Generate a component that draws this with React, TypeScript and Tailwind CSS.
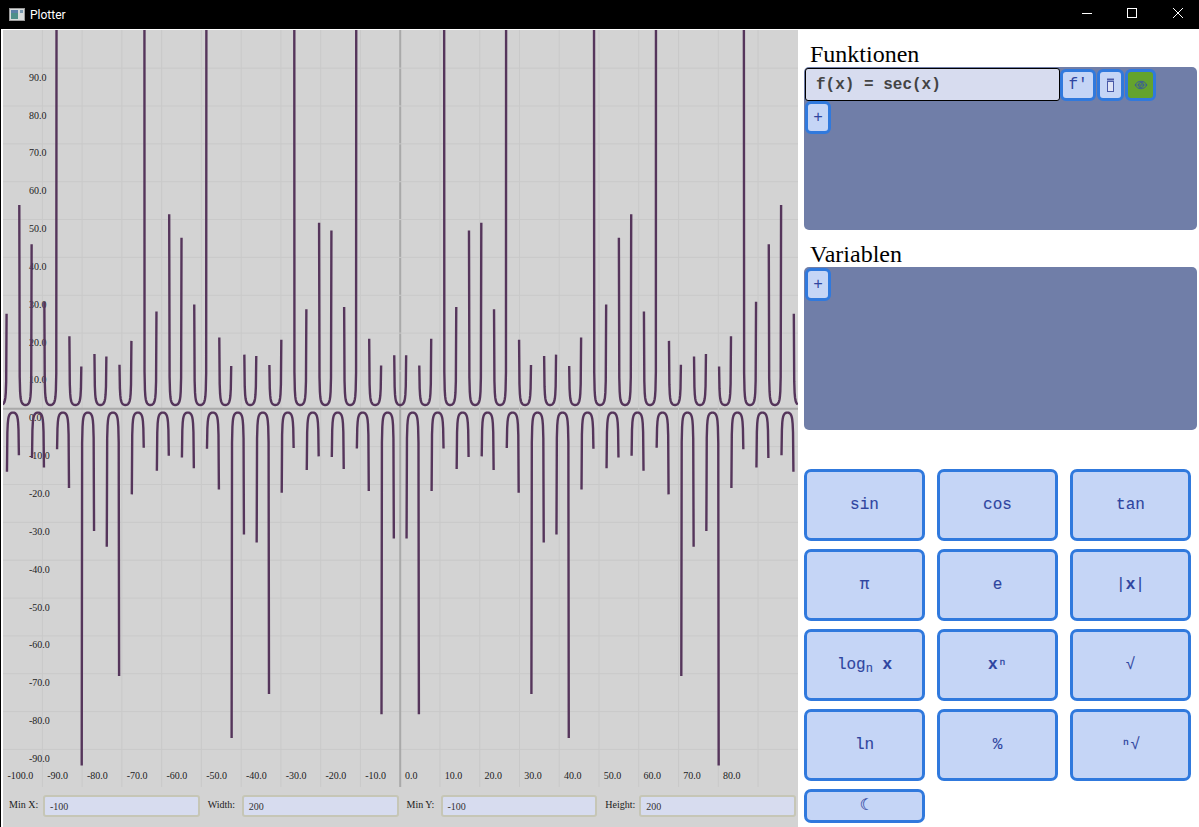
import React from "react";

const SX = 3.976, X0 = 397.2, SY = 3.785, Y0 = 378.8;
const px = (x: number) => X0 + x * SX;
const py = (y: number) => Y0 - y * SY;

function curves(): string {
  let d = "";
  let prev: number | null = null;
  for (let i = -1000; i <= 1000; i++) {
    const x = i / 10;
    const y = 1 / Math.cos(x);
    const brk = prev === null || prev * y < 0;
    d += `${brk ? "M" : "L"}${px(x).toFixed(2)} ${py(y).toFixed(2)}`;
    prev = y;
  }
  return d;
}

const ticks = Array.from({ length: 19 }, (_, i) => -90 + i * 10);

function Plot() {
  return (
    <svg width={795} height={757} className="block bg-[#d3d3d3]" style={{ fontFamily: '"Liberation Serif", serif' }}>
      {ticks.map((t) => (
        <g key={t}>
          <line x1={px(t)} x2={px(t)} y1={0} y2={757} stroke={t === 0 ? "#a9a9a9" : "#c9c9c9"} strokeWidth={t === 0 ? 2 : 1} />
          <line x1={0} x2={795} y1={py(t)} y2={py(t)} stroke={t === 0 ? "#a9a9a9" : "#c9c9c9"} strokeWidth={t === 0 ? 2 : 1} />
        </g>
      ))}
      {ticks.map((t) => (
        <text key={"y" + t} x={26} y={py(t) + 12.5} fontSize={10} fill="#222">{t.toFixed(1)}</text>
      ))}
      {[-100, ...ticks.slice(0, -1)].map((t) => (
        <text key={"x" + t} x={px(t) + 4.8} y={749} fontSize={10} fill="#222">{t.toFixed(1)}</text>
      ))}
      <path d={curves()} fill="none" stroke="#55355b" strokeWidth={2.4} strokeLinejoin="round" />
    </svg>
  );
}

function Field({ label, value }: { label: string; value: string }) {
  return (
    <div className="flex flex-1 items-center">
      <span className="w-[34px] text-[10px] text-[#222] leading-none -mt-[3px] shrink-0">{label}</span>
      <div className="flex-1 h-[22px] rounded-[3px] border-2 border-[#c6c6b6] bg-[#d7dcef] pl-[5px] text-[10px] leading-[20px] text-[#333]">
        {value}
      </div>
    </div>
  );
}

const small = "border-[3px] border-[#3079dd] rounded-[6px] bg-[#c5d5f6] flex items-center justify-center text-[#2f45a0] shrink-0";
const keyCls = "border-[3px] border-[#3079dd] rounded-[7px] bg-[#c5d5f6] flex items-center justify-center text-[16px] text-[#2f45a0] [-webkit-text-stroke:0.12px_#2f45a0]";

function Plus() {
  return <div className={`${small} w-[26px] h-[33px] text-[16px]`}>+</div>;
}

function Panel({ children }: { children: React.ReactNode }) {
  return <div className="ml-[6px] w-[393px] h-[163px] shrink-0 rounded-[5px] bg-[#707ea8] p-[1px] flex flex-wrap content-start items-start">{children}</div>;
}

function Heading({ children, first }: { children: React.ReactNode; first?: boolean }) {
  return (
    <div className={`${first ? "h-[38px] pt-[10px]" : "h-[37px] pt-[9px]"} shrink-0 pl-[12px] text-[24px] leading-[30px] text-black`} style={{ fontFamily: '"Liberation Serif", serif' }}>
      {children}
    </div>
  );
}

const keys: React.ReactNode[] = [
  "sin", "cos", "tan", "π", "e",
  <span>|<b>x</b>|</span>,
  <span>log<sub className="text-[12px] font-normal">n</sub> <b>x</b></span>,
  <span><b>x</b>ⁿ</span>,
  "√", "ln", "%", "ⁿ√",
];

export default function App() {
  return (
    <div className="w-[1199px] h-[827px] bg-white overflow-hidden flex flex-col" style={{ fontFamily: '"Liberation Serif", serif' }}>
      <div className="h-[29px] bg-black flex items-center text-white shrink-0">
        <svg width={16} height={14} className="ml-[9px] mr-[5px]" viewBox="0 0 16 14">
          <rect x={0.5} y={0.5} width={15} height={12} fill="#d8dcdc" stroke="#9a9a9a" />
          <rect x={2} y={2} width={7} height={9} fill="#4f8f8a" />
          <rect x={2} y={2} width={7} height={3} fill="#5d80a8" />
          <rect x={11} y={2} width={3} height={3} fill="#7a9ab0" />
        </svg>
        <span className="text-[12px]" style={{ fontFamily: 'Roboto, sans-serif' }}>Plotter</span>
        <div className="ml-auto flex items-center">
          <svg width={46} height={29}><line x1={21} x2={31} y1={13.5} y2={13.5} stroke="#fff" /></svg>
          <svg width={46} height={29}><rect x={20.5} y={8.5} width={9} height={9} fill="none" stroke="#fff" /></svg>
          <svg width={46} height={29}><path d="M20 8l10 10M30 8l-10 10" stroke="#fff" fill="none" /></svg>
        </div>
      </div>
      <div className="flex flex-1 min-h-0 border-l border-black">
        <div className="w-[797px] pl-[2px] pt-[1px] shrink-0">
          <Plot />
          <div className="h-[40px] w-[795px] bg-[#d3d3d3] flex items-center gap-[8px] pl-[6px] pr-[2px] pb-[2px]">
            <Field label="Min X:" value="-100" />
            <Field label="Width:" value="200" />
            <Field label="Min Y:" value="-100" />
            <Field label="Height:" value="200" />
          </div>
        </div>
        <div className="flex-1 flex flex-col" style={{ fontFamily: '"Liberation Mono", "DejaVu Sans Mono", monospace' }}>
          <Heading first>Funktionen</Heading>
          <Panel>
            <div className="w-[255px] h-[33px] rounded-[3px] border border-black bg-[#d7dcef] pl-[10px] pt-[1px] text-[16px] font-bold leading-[31px] text-[#444]">
              f(x) = sec(x)
            </div>
            <div className={`${small} w-[36px] h-[32px] mt-[1px] text-[16px]`}>f'</div>
            <div className={`${small} w-[27px] h-[32px] mt-[1px] ml-[1px]`}>
              <svg width={9} height={15} viewBox="0 0 9 15" fill="none" stroke="#4a5aa8">
                <rect x={1.5} y={3.5} width={6} height={10} fill="#dfe4f6" />
                <path d="M1 1.5h7" strokeWidth={2} />
              </svg>
            </div>
            <div className={`${small} w-[31px] h-[32px] mt-[1px] ml-[1px] !bg-[#64a32d]`}>
              <svg width={14} height={10} viewBox="0 0 14 10" fill="none" stroke="#3a5a9a">
                <path d="M1 5c3-5 9-5 12 0c-3 5-9 5-12 0z" />
                <circle cx={7} cy={5} r={2.5} />
                <path d="M9 1L5 9M1 5h12" strokeWidth={0.7} />
              </svg>
            </div>
            <div className="w-full h-0" />
            <Plus />
          </Panel>
          <Heading>Variablen</Heading>
          <Panel>
            <Plus />
          </Panel>
          <div className="grid grid-cols-[121px_121px_121px] gap-x-[12px] gap-y-[8px] ml-[6px] mt-[39px] auto-rows-[72px] shrink-0">
            {keys.map((k, i) => (
              <div key={i} className={keyCls}>{k}</div>
            ))}
            <div className={`h-[34px] ${keyCls}`}>☾</div>
          </div>
        </div>
      </div>
    </div>
  );
}
